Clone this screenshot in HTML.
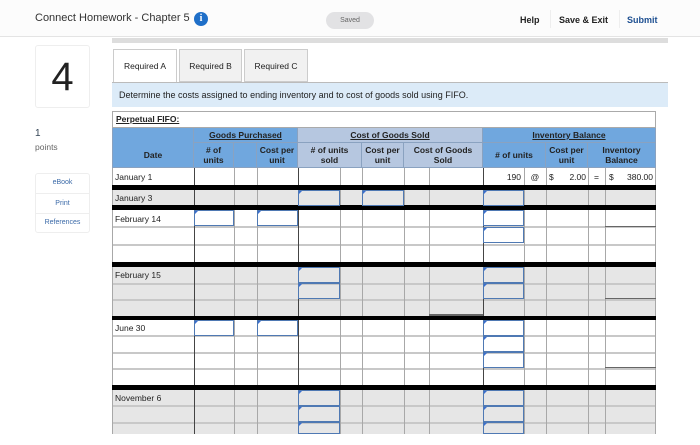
<!DOCTYPE html>
<html><head><meta charset="utf-8">
<style>
*{margin:0;padding:0;box-sizing:border-box}
body{width:700px;height:445px;background:#fff;position:relative;overflow:hidden;font-family:"Liberation Sans",sans-serif;color:#222}
.a{position:absolute}
.hdr{left:0;top:0;width:700px;height:37px;background:#fcfcfc;border-bottom:1px solid #e4e4e4}
.row{position:absolute;left:112px;width:544px}
.vl{position:absolute;top:168px;height:266px;width:1px;background:#a8a8a8}
.vd{background:#444}
.hl{position:absolute;left:112px;width:544px;height:2px;background:#c8c8c8}
.blk{position:absolute;left:112px;width:544px;background:#000}
.in{position:absolute;border:1.5px solid #4f79b3;height:16px}
.in:before{content:"";position:absolute;left:0;top:0;border-left:3px solid #3a6fd0;border-bottom:3px solid transparent;border-top:0}
.t{position:absolute;font-size:8.5px;color:#222}
.h{position:absolute;font-size:8.5px;font-weight:bold;text-align:center;color:#222;line-height:10px;border-right:1px solid #8aa2c0;border-bottom:1px solid #8aa2c0}
.u{text-decoration:underline}
</style></head><body>
<div class="a hdr"></div>
<div class="a" style="left:35px;top:12px;font-size:11px;color:#333">Connect Homework - Chapter 5</div>
<div class="a" style="left:194px;top:12px;width:14px;height:14px;border-radius:7px;background:#1f6fc8;color:#fff;font-size:10px;font-weight:bold;text-align:center;line-height:14px;font-family:'Liberation Serif',serif">i</div>
<div class="a" style="left:326px;top:12px;width:48px;height:17px;border-radius:9px;background:#e2e2e4;font-size:7px;color:#666;text-align:center;line-height:17px">Saved</div>
<div class="a" style="left:520px;top:15px;font-size:9px;font-weight:bold">Help</div>
<div class="a" style="left:550px;top:10px;width:1px;height:18px;background:#eee"></div>
<div class="a" style="left:559px;top:15px;font-size:9px;font-weight:bold">Save &amp; Exit</div>
<div class="a" style="left:619px;top:10px;width:1px;height:18px;background:#eee"></div>
<div class="a" style="left:627px;top:15px;font-size:9px;font-weight:bold;color:#1d4f91">Submit</div>
<div class="a" style="left:112px;top:38px;width:556px;height:5px;background:#ddd"></div>

<div class="a" style="left:35px;top:45px;width:55px;height:63px;border:1px solid #eee;border-radius:3px;font-size:40px;text-align:center;line-height:62px;color:#222">4</div>
<div class="a" style="left:35px;top:128px;font-size:10px;color:#345">1</div>
<div class="a" style="left:35px;top:142px;font-size:8.5px;color:#666">points</div>
<div class="a" style="left:35px;top:173px;width:55px;height:60px;border:1px solid #eee;border-radius:3px"></div>
<div class="a" style="left:35px;top:179px;width:55px;text-align:center;font-size:7px;color:#3b6aa8">eBook</div>
<div class="a" style="left:36px;top:193px;width:53px;height:1px;background:#eee"></div>
<div class="a" style="left:35px;top:200px;width:55px;text-align:center;font-size:7px;color:#3b6aa8">Print</div>
<div class="a" style="left:36px;top:213px;width:53px;height:1px;background:#eee"></div>
<div class="a" style="left:35px;top:219px;width:55px;text-align:center;font-size:7px;color:#3b6aa8">References</div>

<div class="a" style="left:113px;top:49px;width:64px;height:34px;background:#fff;border:1px solid #ccc;border-bottom:none;font-size:8.5px;text-align:center;line-height:32px">Required A</div>
<div class="a" style="left:179px;top:49px;width:63px;height:33px;background:#f1f1f1;border:1px solid #ccc;font-size:8.5px;text-align:center;line-height:32px">Required B</div>
<div class="a" style="left:244px;top:49px;width:64px;height:33px;background:#f1f1f1;border:1px solid #ccc;font-size:8.5px;text-align:center;line-height:32px">Required C</div>
<div class="a" style="left:112px;top:82px;width:556px;height:25px;background:#dcebf8;border-top:1px solid #bbb;font-size:9px;line-height:25px;padding-left:7px;color:#222">Determine the costs assigned to ending inventory and to cost of goods sold using FIFO.</div>

<div class="a" style="left:112px;top:111px;width:544px;height:17px;border:1px solid #aaa;font-size:8.5px;font-weight:bold;padding-left:3px;line-height:15px"><span class="u">Perpetual FIFO:</span></div>
<div class="h" style="left:112px;top:128px;width:82px;height:40px;background:#70a7de;line-height:10px;padding-top:22px;border-left:1px solid #8aa2c0">Date</div>
<div class="h" style="left:194px;top:128px;width:104px;height:15px;background:#70a7de;line-height:14px"><span class="u">Goods Purchased</span></div>
<div class="h" style="left:298px;top:128px;width:185px;height:15px;background:#b6c7e0;line-height:14px"><span class="u">Cost of Goods Sold</span></div>
<div class="h" style="left:483px;top:128px;width:173px;height:15px;background:#70a7de;line-height:14px"><span class="u">Inventory Balance</span></div>
<div class="h" style="left:194px;top:143px;width:40px;height:25px;background:#70a7de;padding-top:2px">#&nbsp;of<br>units</div>
<div class="h" style="left:234px;top:143px;width:23px;height:25px;background:#70a7de"></div>
<div class="h" style="left:257px;top:143px;width:41px;height:25px;background:#70a7de;padding-top:2px">Cost per<br>unit</div>
<div class="h" style="left:298px;top:143px;width:64px;height:25px;background:#b6c7e0;padding-top:2px"># of units<br>sold</div>
<div class="h" style="left:362px;top:143px;width:42px;height:25px;background:#b6c7e0;padding-top:2px">Cost per<br>unit</div>
<div class="h" style="left:404px;top:143px;width:79px;height:25px;background:#b6c7e0;padding-top:2px">Cost of Goods<br>Sold</div>
<div class="h" style="left:483px;top:143px;width:63px;height:25px;background:#70a7de;line-height:25px"># of units</div>
<div class="h" style="left:546px;top:143px;width:42px;height:25px;background:#70a7de;padding-top:2px">Cost per<br>unit</div>
<div class="h" style="left:588px;top:143px;width:68px;height:25px;background:#70a7de;padding-top:2px">Inventory<br>Balance</div>

<div class="row" style="top:168px;height:17px;background:#fff"></div>
<div class="row" style="top:190px;height:15px;background:#e6e6e6"></div>
<div class="row" style="top:210px;height:52px;background:#fff"></div>
<div class="row" style="top:267px;height:49px;background:#e6e6e6"></div>
<div class="row" style="top:320px;height:65px;background:#fff"></div>
<div class="row" style="top:390px;height:44px;background:#e6e6e6"></div>

<div class="hl" style="top:226px"></div>
<div class="hl" style="top:244px"></div>
<div class="hl" style="top:283px"></div>
<div class="hl" style="top:299px"></div>
<div class="hl" style="top:335px"></div>
<div class="hl" style="top:352px"></div>
<div class="hl" style="top:368px"></div>
<div class="hl" style="top:405px"></div>
<div class="hl" style="top:422px"></div>

<div class="vl" style="left:112px"></div>
<div class="vl vd" style="left:194px"></div>
<div class="vl" style="left:234px"></div>
<div class="vl" style="left:257px"></div>
<div class="vl vd" style="left:298px"></div>
<div class="vl" style="left:340px"></div>
<div class="vl" style="left:362px"></div>
<div class="vl" style="left:404px"></div>
<div class="vl" style="left:429px"></div>
<div class="vl vd" style="left:483px"></div>
<div class="vl" style="left:524px"></div>
<div class="vl" style="left:546px"></div>
<div class="vl" style="left:588px"></div>
<div class="vl" style="left:605px"></div>
<div class="vl" style="left:655px"></div>

<div class="blk" style="top:185px;height:5px"></div>
<div class="blk" style="top:205px;height:5px"></div>
<div class="blk" style="top:262px;height:5px"></div>
<div class="blk" style="top:316px;height:4px"></div>
<div class="blk" style="top:385px;height:5px"></div>

<div class="a" style="left:429px;top:314px;width:54px;height:2px;background:#666"></div>
<div class="a" style="left:605px;top:298px;width:51px;height:1px;background:#666"></div>
<div class="a" style="left:605px;top:367px;width:51px;height:1px;background:#666"></div>
<div class="a" style="left:605px;top:226px;width:51px;height:1px;background:#666"></div>

<div class="in" style="left:298px;top:190px;width:42px"></div>
<div class="in" style="left:362px;top:190px;width:42px"></div>
<div class="in" style="left:483px;top:190px;width:41px"></div>
<div class="in" style="left:194px;top:210px;width:40px"></div>
<div class="in" style="left:257px;top:210px;width:41px"></div>
<div class="in" style="left:483px;top:210px;width:41px"></div>
<div class="in" style="left:483px;top:227px;width:41px"></div>
<div class="in" style="left:298px;top:267px;width:42px"></div>
<div class="in" style="left:298px;top:283px;width:42px"></div>
<div class="in" style="left:483px;top:267px;width:41px"></div>
<div class="in" style="left:483px;top:283px;width:41px"></div>
<div class="in" style="left:194px;top:320px;width:40px"></div>
<div class="in" style="left:257px;top:320px;width:41px"></div>
<div class="in" style="left:483px;top:320px;width:41px"></div>
<div class="in" style="left:483px;top:336px;width:41px"></div>
<div class="in" style="left:483px;top:352px;width:41px"></div>
<div class="in" style="left:298px;top:390px;width:42px"></div>
<div class="in" style="left:298px;top:406px;width:42px"></div>
<div class="in" style="left:298px;top:422px;width:42px;height:12px"></div>
<div class="in" style="left:483px;top:390px;width:41px"></div>
<div class="in" style="left:483px;top:406px;width:41px"></div>
<div class="in" style="left:483px;top:422px;width:41px;height:12px"></div>

<div class="t" style="left:115px;top:172px">January 1</div>
<div class="t" style="left:115px;top:193px">January 3</div>
<div class="t" style="left:115px;top:214px">February 14</div>
<div class="t" style="left:115px;top:270px">February 15</div>
<div class="t" style="left:115px;top:323px">June 30</div>
<div class="t" style="left:115px;top:393px">November 6</div>
<div class="t" style="left:483px;top:172px;width:38px;text-align:right">190</div>
<div class="t" style="left:524px;top:172px;width:22px;text-align:center">@</div>
<div class="t" style="left:549px;top:172px">$</div>
<div class="t" style="left:546px;top:172px;width:40px;text-align:right">2.00</div>
<div class="t" style="left:588px;top:172px;width:17px;text-align:center">=</div>
<div class="t" style="left:609px;top:172px">$</div>
<div class="t" style="left:605px;top:172px;width:48px;text-align:right">380.00</div>
</body></html>
